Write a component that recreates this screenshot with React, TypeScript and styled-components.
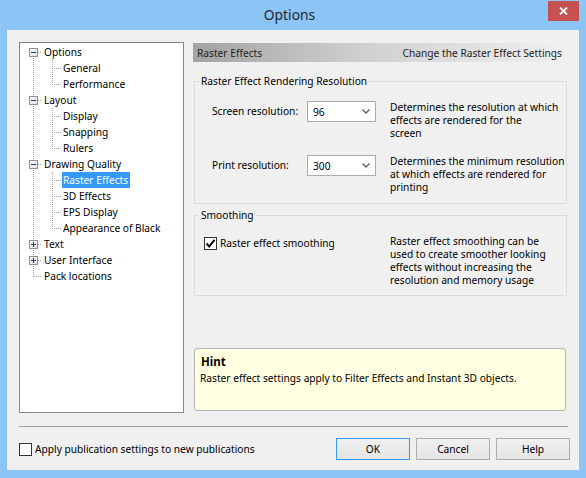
import React from 'react';
import styled, { createGlobalStyle } from 'styled-components';

const GlobalStyle = createGlobalStyle`
    body {
        margin: 0;
        background: #ffffff;
    }
    * {
        box-sizing: border-box;
    }
`;

const UI_FONT = `"Noto Sans", "Open Sans", "Liberation Sans", sans-serif`;
const UI_SIZE = '10.2px';

const Frame = styled.div`
    width: 586px;
    height: 478px;
    background: #8bc4f5;
    display: flex;
    flex-flow: column;
    font-family: ${UI_FONT};
    font-size: ${UI_SIZE};
    color: #000;
`;

const TitleBar = styled.div`
    height: 30px;
    display: grid;
    grid-template-columns: 1fr auto 1fr;
    padding-right: 7px;
`;

const Title = styled.div`
    grid-column: 2;
    font-size: 13.8px;
    line-height: 30px;
    color: #262626;
`;

const CloseButton = styled.div`
    grid-column: 3;
    justify-self: end;
    margin-top: 1px;
    width: 31px;
    height: 20px;
    background: #c75050;
    display: flex;
    align-items: center;
    justify-content: center;
`;

const Client = styled.div`
    margin: 0 7px;
    height: 440px;
    background: #f0f0f0;
    display: flex;
    flex-flow: column;
    padding: 12px 0 0 12px;
`;

const MainRow = styled.div`
    display: flex;
    flex-flow: row nowrap;
    gap: 9px;
    height: 371px;
`;

const TreeBox = styled.div`
    width: 165px;
    height: 371px;
    background: #fff;
    border: 1px solid #828790;
    padding-top: 1px;
`;

const TreeRow = styled.div`
    display: flex;
    align-items: center;
    height: 16px;
    white-space: nowrap;
`;

const TreeLabel = styled.span<{ $selected?: boolean }>`
    line-height: 16px;
    padding: 0 2px 0 1px;
    background: ${(p) => (p.$selected ? '#3399ff' : 'transparent')};
    color: ${(p) => (p.$selected ? '#fff' : '#000')};
`;

const RightPanel = styled.div`
    width: 374px;
    display: flex;
    flex-flow: column;
`;

const Header = styled.div`
    margin-top: 1px;
    width: 372px;
    height: 19px;
    background: linear-gradient(to right, #a3a3a3 0%, #cfcfcf 45%, #f0f0f0 100%);
    display: flex;
    justify-content: space-between;
    align-items: center;
    padding: 0 3px 0 4px;
    color: #1e1e1e;
`;

const Group = styled.fieldset<{ $top: number }>`
    margin: ${(p) => p.$top}px 0 0 1px;
    width: 373px;
    border: 1px solid #dcdcdc;
    padding: 0;
    min-width: 0;
`;

const Legend = styled.legend`
    margin-left: 4px;
    padding: 0 2px;
    line-height: 14px;
    color: #000;
`;

const ResolutionGrid = styled.div`
    display: grid;
    grid-template-columns: 95px 69px 1fr;
    row-gap: 15px;
    padding: 13px 3px 9px 17px;
    align-items: start;
`;

const FieldLabel = styled.div`
    line-height: 21px;
`;

const Combo = styled.div`
    height: 21px;
    background: #fff;
    border: 1px solid #acacac;
    display: flex;
    align-items: center;
    justify-content: space-between;
    padding: 0 5px 0 5px;
`;

const Description = styled.div<{ $inset?: number }>`
    line-height: 13px;
    white-space: nowrap;
    padding-left: ${(p) => p.$inset ?? 0}px;
`;

const SmoothingRow = styled.div`
    display: grid;
    grid-template-columns: 186px 1fr;
    padding: 13px 3px 8px 9px;
    align-items: start;
`;

const CheckLine = styled.label`
    display: flex;
    align-items: center;
    gap: 3px;
    line-height: 16px;
`;

const Box = styled.span`
    width: 13px;
    height: 13px;
    border: 1px solid #333;
    background: #fff;
    display: inline-flex;
    align-items: center;
    justify-content: center;
    flex-shrink: 0;
`;

const Hint = styled.div`
    margin: auto 0 2px 1px;
    width: 372px;
    height: 63px;
    background: #ffffe1;
    border: 1px solid #b4b4b4;
    border-radius: 3px;
    padding: 5px 5px;
`;

const HintTitle = styled.div`
    font-weight: bold;
    font-size: 11.5px;
    line-height: 16px;
    padding-left: 1px;
`;

const HintText = styled.div`
    line-height: 16px;
`;

const Separator = styled.div`
    margin-top: 13px;
    width: 549px;
    height: 1px;
    background: #a0a0a0;
`;

const BottomRow = styled.div`
    margin: 11px 9px 0 0;
    display: flex;
    align-items: center;
    justify-content: space-between;
`;

const Buttons = styled.div`
    display: flex;
    gap: 6px;
`;

const Button = styled.button<{ $default?: boolean }>`
    width: 74px;
    height: 22px;
    font-family: ${UI_FONT};
    font-size: ${UI_SIZE};
    color: #000;
    background: linear-gradient(#f0f0f0, #e5e5e5);
    border: 1px solid ${(p) => (p.$default ? '#3399ff' : '#acacac')};
    padding: 0;
`;

type TreeNode = {
    label: string;
    depth: 0 | 1;
    toggle?: 'open' | 'closed';
    first?: boolean;
    last?: boolean;
    lastChild?: boolean;
    selected?: boolean;
};

const nodes: TreeNode[] = [
    { label: 'Options', depth: 0, toggle: 'open', first: true },
    { label: 'General', depth: 1 },
    { label: 'Performance', depth: 1, lastChild: true },
    { label: 'Layout', depth: 0, toggle: 'open' },
    { label: 'Display', depth: 1 },
    { label: 'Snapping', depth: 1 },
    { label: 'Rulers', depth: 1, lastChild: true },
    { label: 'Drawing Quality', depth: 0, toggle: 'open' },
    { label: 'Raster Effects', depth: 1, selected: true },
    { label: '3D Effects', depth: 1 },
    { label: 'EPS Display', depth: 1 },
    { label: 'Appearance of Black', depth: 1, lastChild: true },
    { label: 'Text', depth: 0, toggle: 'closed' },
    { label: 'User Interface', depth: 0, toggle: 'closed' },
    { label: 'Pack locations', depth: 0, last: true }
];

const DOT = { stroke: '#a0a0a0', strokeWidth: 1, strokeDasharray: '1 1' };

// dotted tree connectors drawn per row
const Gutter = ({ node }: { node: TreeNode }) => {
    const width = node.depth === 0 ? 23 : 42;
    return (
        <svg width={width} height={16} shapeRendering='crispEdges' style={{ flexShrink: 0 }}>
            {node.depth === 0 ? (
                <>
                    <line x1={13.5} y1={node.first ? 8 : 0} x2={13.5} y2={node.last ? 9 : 16} {...DOT} />
                    <line x1={node.toggle ? 18 : 14} y1={8.5} x2={22} y2={8.5} {...DOT} />
                    {node.toggle && (
                        <>
                            <rect x={9.5} y={4.5} width={8} height={8} fill='url(#boxFill)' stroke='#919191' />
                            <line x1={11} y1={8.5} x2={16} y2={8.5} stroke='#1e3f78' />
                            {node.toggle === 'closed' && <line x1={13.5} y1={6} x2={13.5} y2={11} stroke='#1e3f78' />}
                        </>
                    )}
                </>
            ) : (
                <>
                    <line x1={13.5} y1={0} x2={13.5} y2={16} {...DOT} />
                    <line x1={32.5} y1={0} x2={32.5} y2={node.lastChild ? 9 : 16} {...DOT} />
                    <line x1={34} y1={8.5} x2={41} y2={8.5} {...DOT} />
                </>
            )}
        </svg>
    );
};

const Chevron = () => (
    <svg width='8' height='5' viewBox='0 0 8 5'>
        <path d='M0.5 0.5 L4 4 L7.5 0.5' fill='none' stroke='#606060' strokeWidth='1.4' />
    </svg>
);

const Check = () => (
    <svg width='11' height='11' viewBox='0 0 11 11'>
        <path d='M1.5 5.5 L4.2 8.5 L9.5 1.8' fill='none' stroke='#000' strokeWidth='2' />
    </svg>
);

const App = () => {
    return (
        <>
            <GlobalStyle />
            <svg width='0' height='0' style={{ position: 'absolute' }}>
                <defs>
                    <linearGradient id='boxFill' x1='0' y1='0' x2='1' y2='1'>
                        <stop offset='0' stopColor='#ffffff' />
                        <stop offset='1' stopColor='#dcdcdc' />
                    </linearGradient>
                </defs>
            </svg>
            <Frame>
                <TitleBar>
                    <Title>Options</Title>
                    <CloseButton>
                        <svg width='9' height='8' viewBox='0 0 9 8'>
                            <path d='M1 0.5 L8 7.5 M8 0.5 L1 7.5' stroke='#fff' strokeWidth='1.8' />
                        </svg>
                    </CloseButton>
                </TitleBar>
                <Client>
                    <MainRow>
                        <TreeBox>
                            {nodes.map((n) => (
                                <TreeRow key={n.label}>
                                    <Gutter node={n} />
                                    <TreeLabel $selected={n.selected}>{n.label}</TreeLabel>
                                </TreeRow>
                            ))}
                        </TreeBox>
                        <RightPanel>
                            <Header>
                                <span>Raster Effects</span>
                                <span>Change the Raster Effect Settings</span>
                            </Header>
                            <Group $top={12}>
                                <Legend>Raster Effect Rendering Resolution</Legend>
                                <ResolutionGrid>
                                    <FieldLabel>Screen resolution:</FieldLabel>
                                    <Combo>
                                        <span>96</span>
                                        <Chevron />
                                    </Combo>
                                    <Description $inset={14}>
                                        Determines the resolution at which
                                        <br />
                                        effects are rendered for the
                                        <br />
                                        screen
                                    </Description>
                                    <FieldLabel>Print resolution:</FieldLabel>
                                    <Combo>
                                        <span>300</span>
                                        <Chevron />
                                    </Combo>
                                    <Description $inset={14}>
                                        Determines the minimum resolution
                                        <br />
                                        at which effects are rendered for
                                        <br />
                                        printing
                                    </Description>
                                </ResolutionGrid>
                            </Group>
                            <Group $top={4}>
                                <Legend>Smoothing</Legend>
                                <SmoothingRow>
                                    <CheckLine>
                                        <Box>
                                            <Check />
                                        </Box>
                                        Raster effect smoothing
                                    </CheckLine>
                                    <Description>
                                        Raster effect smoothing can be
                                        <br />
                                        used to create smoother looking
                                        <br />
                                        effects without increasing the
                                        <br />
                                        resolution and memory usage
                                    </Description>
                                </SmoothingRow>
                            </Group>
                            <Hint>
                                <HintTitle>Hint</HintTitle>
                                <HintText>Raster effect settings apply to Filter Effects and Instant 3D objects.</HintText>
                            </Hint>
                        </RightPanel>
                    </MainRow>
                    <Separator />
                    <BottomRow>
                        <CheckLine>
                            <Box />
                            Apply publication settings to new publications
                        </CheckLine>
                        <Buttons>
                            <Button $default>OK</Button>
                            <Button>Cancel</Button>
                            <Button>Help</Button>
                        </Buttons>
                    </BottomRow>
                </Client>
            </Frame>
        </>
    );
};

export default App;
